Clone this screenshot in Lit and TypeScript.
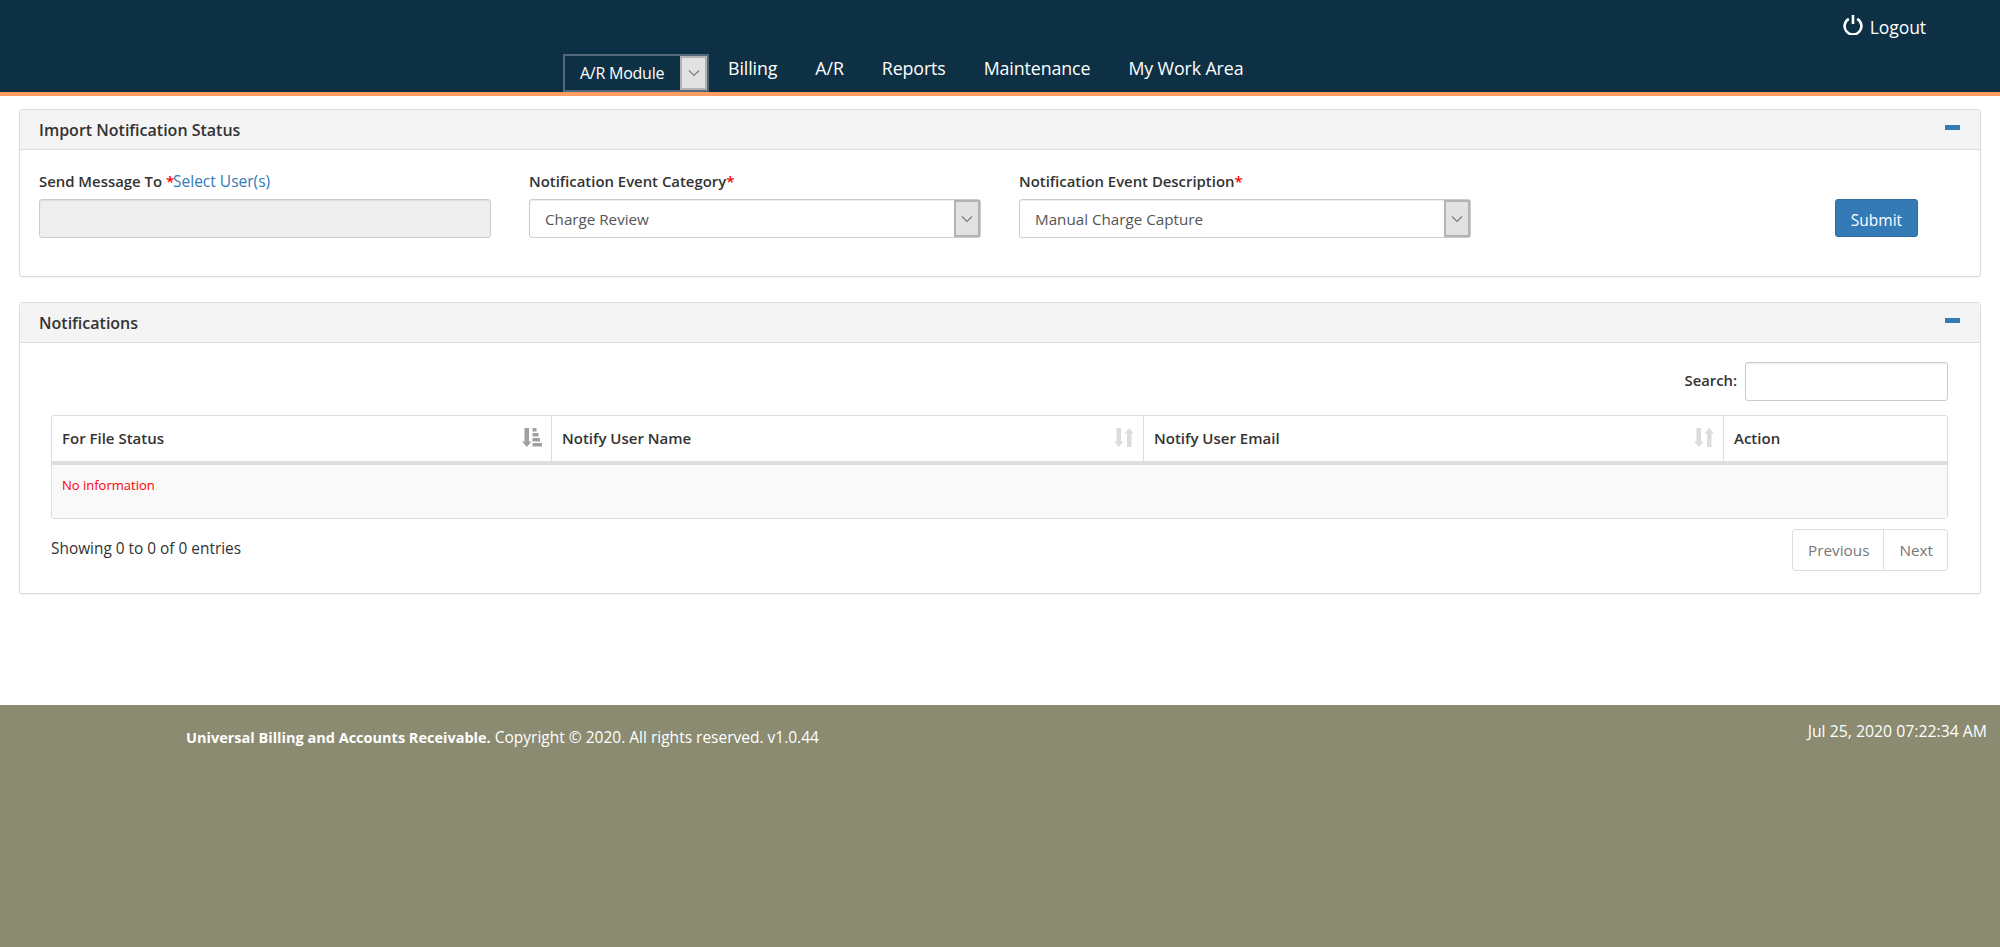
import { LitElement, html, css, svg } from 'lit';
import { customElement } from 'lit/decorators.js';

const chevron = svg`<svg viewBox="0 0 12 8" width="12" height="8"><path d="M1 1.500l5 5 5-5" fill="none" stroke="#7c7c7c" stroke-width="1.200"/></svg>`;

const sortIdle = svg`<svg viewBox="0 0 20 20" width="20" height="20" fill="#dcdcdc"><path d="M2.500 0H7v13.500h2.500L4.750 19 0 13.500h2.500z"/><path d="M15.250 0L20 5.500h-2.500V19H13V5.500h-2.500z"/></svg>`;

const sortAsc = svg`<svg viewBox="0 0 20 20" width="20" height="20" fill="#a0a0a0"><path d="M2.500 0H7v13.500h2.500L4.750 19 0 13.500h2.500z"/><rect x="10.500" y="0" width="4" height="3.500"/><rect x="10.500" y="5" width="6" height="3.500"/><rect x="10.500" y="10" width="7.500" height="3.500"/><rect x="10.500" y="15" width="9.500" height="3.500"/></svg>`;

const power = svg`<svg viewBox="0 0 20 20" width="20" height="20"><path d="M5.800 3.800a8.400 8.400 0 1 0 8.400 0" fill="none" stroke="#fff" stroke-width="2.600"/><rect x="8.700" y="0" width="2.600" height="9" fill="#fff"/></svg>`;

@customElement('app-root')
export class AppRoot extends LitElement {
  static styles = css`
    :host {
      display: flex;
      flex-direction: column;
      min-height: 947px;
      font-family: 'Open Sans', 'Liberation Sans', sans-serif;
      font-size: 14px;
      color: #333;
      background: #fff;
    }
    .header {
      height: 92px;
      box-sizing: content-box;
      background: #0e3044;
      border-bottom: 4px solid #ff9e62;
      display: flex;
      flex-direction: column;
      color: #fff;
    }
    .logout {
      align-self: flex-end;
      display: flex;
      align-items: center;
      gap: 7px;
      margin: 15px 74px 0 0;
      height: 24px;
      font-size: 17.600px;
      letter-spacing: -0.1px;
    }
    .logout svg {
      margin-top: -4px;
    }
    .nav {
      display: flex;
      align-items: flex-end;
      margin: 15px 0 0 563px;
      height: 38px;
    }
    .module {
      width: 146px;
      height: 38px;
      box-sizing: border-box;
      border: 2px solid #556879;
      display: flex;
      justify-content: space-between;
      font-size: 16px;
      letter-spacing: -0.25px;
    }
    .module span {
      padding: 6px 0 0 15px;
    }
    .arrow {
      width: 27px;
      flex: none;
      background: #e2e2e2;
      border: 2px solid #b3b3b3;
      box-sizing: border-box;
      display: flex;
      align-items: center;
      justify-content: center;
    }
    .links {
      display: flex;
      gap: 38px;
      margin: 0 0 12px 19px;
      font-size: 17.800px;
      letter-spacing: -0.1px;
    }
    main {
      padding: 13px 19px 111px;
      display: flex;
      flex-direction: column;
      gap: 25px;
    }
    .panel {
      border: 1px solid #ddd;
      border-radius: 3px;
      box-shadow: 0 1px 1px rgba(0, 0, 0, 0.05);
    }
    .panel-head {
      height: 39px;
      background: #f4f4f4;
      border-bottom: 1px solid #ddd;
      display: flex;
      align-items: center;
      justify-content: space-between;
      padding: 0 20px 0 19px;
      font-size: 16px;
      font-weight: 600;
    }
    .collapse {
      width: 15px;
      height: 5px;
      background: #337ab7;
      margin-top: -5px;
    }
    .form {
      height: 126px;
      box-sizing: border-box;
      padding: 20px 19px 0;
      display: grid;
      grid-template-columns: 452px 452px 452px 1fr;
      column-gap: 38px;
    }
    label {
      display: block;
      height: 29px;
      font-size: 14.900px;
      font-weight: 600;
      line-height: 22px;
    }
    .req {
      color: #f00;
    }
    .select-user {
      margin-left: -1px;
      color: #337ab7;
      font-size: 15.500px;
      font-weight: 400;
    }
    .field {
      height: 39px;
      box-sizing: border-box;
      border: 1px solid #ccc;
      border-radius: 3px;
      box-shadow: inset 0 1px 1px rgba(0, 0, 0, 0.075);
    }
    .field.disabled {
      background: #eee;
    }
    .field.select {
      display: flex;
      justify-content: space-between;
      padding-left: 15px;
      line-height: 38px;
      font-size: 15.200px;
      color: #555;
    }
    .field.select .arrow {
      width: 26px;
      height: 37px;
    }
    .submit {
      justify-self: end;
      margin: 29px 43px 0 0;
      width: 83px;
      height: 38px;
      box-sizing: border-box;
      padding-top: 4px;
      background: #337ab7;
      border: 1px solid #2e6da4;
      border-radius: 3px;
      display: flex;
      align-items: center;
      justify-content: center;
      color: #fff;
      font-size: 15.500px;
    }
    .list-body {
      height: 250px;
      box-sizing: border-box;
      padding: 19px 32px 0 31px;
    }
    .search {
      display: flex;
      justify-content: flex-end;
      align-items: center;
      gap: 8px;
      font-size: 14.800px;
      font-weight: 600;
    }
    .search span {
      margin-top: -4px;
    }
    .search .input {
      width: 203px;
      height: 39px;
      box-sizing: border-box;
      border: 1px solid #ccc;
      border-radius: 3px;
      box-shadow: inset 0 1px 1px rgba(0, 0, 0, 0.075);
    }
    table {
      width: 100%;
      margin-top: 14px;
      border-collapse: separate;
      border-spacing: 0;
      table-layout: fixed;
      border: 1px solid #ddd;
      border-radius: 3px;
    }
    th {
      height: 49px;
      padding: 0 9px 2px 10px;
      box-sizing: border-box;
      border-bottom: 4px solid #ddd;
      border-right: 1px solid #ddd;
      text-align: left;
      font-size: 15px;
      font-weight: 600;
    }
    th:last-child {
      border-right: none;
    }
    th div {
      display: flex;
      align-items: center;
      justify-content: space-between;
    }
    th svg {
      flex: none;
    }
    td {
      height: 53px;
      padding: 11px 10px 0;
      box-sizing: border-box;
      vertical-align: top;
      background: #f9f9f9;
      color: #f00;
      font-size: 13px;
    }
    .list-foot {
      display: flex;
      justify-content: space-between;
      margin-top: 10px;
    }
    .info {
      padding-top: 9px;
      font-size: 15.400px;
    }
    .pager {
      display: flex;
      height: 42px;
      box-sizing: border-box;
      border: 1px solid #ddd;
      border-radius: 4px;
      color: #777;
      font-size: 15.300px;
    }
    .pager span {
      display: flex;
      align-items: center;
      padding: 0 14px 0 15px;
    }
    .pager span + span {
      border-left: 1px solid #ddd;
    }
    footer {
      flex: 1;
      background: #8b8b71;
      color: #fff;
      display: flex;
      justify-content: space-between;
      align-items: flex-start;
      font-size: 15.500px;
    }
    .copy {
      margin: 21px 0 0 186px;
    }
    .copy b {
      font-size: 14.500px;
      font-weight: 700;
    }
    .clock {
      margin: 15px 13px 0 0;
      font-size: 15.800px;
    }
  `;

  private panelHead(title: string) {
    return html`<div class="panel-head">${title}<div class="collapse"></div></div>`;
  }

  private selectField(value: string) {
    return html`<div class="field select">
      ${value}
      <div class="arrow">${chevron}</div>
    </div>`;
  }

  render() {
    return html`
      <div class="header">
        <div class="logout">${power}Logout</div>
        <div class="nav">
          <div class="module">
            <span>A/R Module</span>
            <div class="arrow">${chevron}</div>
          </div>
          <div class="links">
            <span>Billing</span>
            <span>A/R</span>
            <span>Reports</span>
            <span>Maintenance</span>
            <span>My Work Area</span>
          </div>
        </div>
      </div>

      <main>
        <section class="panel">
          ${this.panelHead('Import Notification Status')}
          <div class="form">
            <div>
              <label
                >Send Message To <span class="req">*</span
                ><span class="select-user">Select User(s)</span></label
              >
              <div class="field disabled"></div>
            </div>
            <div>
              <label>Notification Event Category<span class="req">*</span></label>
              ${this.selectField('Charge Review')}
            </div>
            <div>
              <label>Notification Event Description<span class="req">*</span></label>
              ${this.selectField('Manual Charge Capture')}
            </div>
            <div class="submit">Submit</div>
          </div>
        </section>

        <section class="panel">
          ${this.panelHead('Notifications')}
          <div class="list-body">
            <div class="search"><span>Search:</span><div class="input"></div></div>
            <table>
              <colgroup>
                <col style="width: 500px" />
                <col style="width: 592px" />
                <col style="width: 580px" />
                <col />
              </colgroup>
              <thead>
                <tr>
                  <th><div>For File Status ${sortAsc}</div></th>
                  <th><div>Notify User Name ${sortIdle}</div></th>
                  <th><div>Notify User Email ${sortIdle}</div></th>
                  <th>Action</th>
                </tr>
              </thead>
              <tbody>
                <tr><td colspan="4">No information</td></tr>
              </tbody>
            </table>
            <div class="list-foot">
              <div class="info">Showing 0 to 0 of 0 entries</div>
              <div class="pager"><span>Previous</span><span>Next</span></div>
            </div>
          </div>
        </section>
      </main>

      <footer>
        <div class="copy">
          <b>Universal Billing and Accounts Receivable.</b> Copyright © 2020. All rights reserved. v1.0.44
        </div>
        <div class="clock">Jul 25, 2020 07:22:34 AM</div>
      </footer>
    `;
  }
}
